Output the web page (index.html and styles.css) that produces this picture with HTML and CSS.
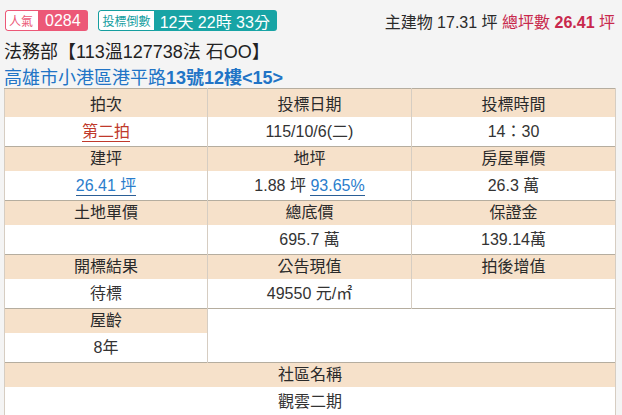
FILE: index.html
```html
<!DOCTYPE html>
<html lang="zh-Hant">
<head>
<meta charset="utf-8">
<link rel="stylesheet" href="styles.css">
</head>
<body>
<div class="page">
  <div class="topbar">
    <div class="badges">
      <span class="badge pink"><span class="lbl">人氣</span><span class="val">0284</span></span>
      <span class="badge teal"><span class="lbl">投標倒數</span><span class="val">12天 22時 33分</span></span>
    </div>
    <div class="area">主建物 17.31 坪 <span class="total">總坪數 <b>26.41</b> 坪</span></div>
  </div>
  <div class="title">法務部【113溫127738法 石OO】</div>
  <div class="addr">高雄市小港區港平路<b>13號12樓&lt;15&gt;</b></div>
  <table class="info">
    <colgroup><col class="c1"><col class="c2"><col class="c3"></colgroup>
    <tr class="hd first"><td>拍次</td><td>投標日期</td><td>投標時間</td></tr>
    <tr class="dt"><td><span class="red">第二拍</span></td><td>115/10/6(二)</td><td>14：30</td></tr>
    <tr class="hd"><td>建坪</td><td>地坪</td><td>房屋單價</td></tr>
    <tr class="dt"><td><span class="blue">26.41 坪</span></td><td>1.88 坪 <span class="blue">93.65%</span></td><td>26.3 萬</td></tr>
    <tr class="hd"><td>土地單價</td><td>總底價</td><td>保證金</td></tr>
    <tr class="dt"><td></td><td>695.7 萬</td><td>139.14萬</td></tr>
    <tr class="hd"><td>開標結果</td><td>公告現值</td><td>拍後增值</td></tr>
    <tr class="dt"><td>待標</td><td>49550 元/㎡</td><td></td></tr>
    <tr class="hd"><td>屋齡</td><td class="empty" colspan="2" rowspan="2"></td></tr>
    <tr class="dt"><td>8年</td></tr>
    <tr class="hd"><td colspan="3">社區名稱</td></tr>
    <tr class="dt"><td colspan="3">觀雲二期</td></tr>
  </table>
</div>
</body>
</html>
```
FILE: styles.css
```css
html, body {
  margin: 0;
  padding: 0;
  background: #f4f4f4;
}
body {
  font-family: "Liberation Sans", "Noto Sans CJK TC", sans-serif;
  color: #2a2a2a;
}
.page {
  padding: 10px 7px 0 4px;
}
.topbar {
  display: flex;
  justify-content: space-between;
  align-items: center;
  height: 21px;
}
.badges {
  display: flex;
  gap: 10px;
  padding-left: 1px;
}
.badge {
  display: flex;
  height: 21px;
  box-sizing: border-box;
  border-radius: 3px;
  overflow: hidden;
}
.badge .lbl {
  display: flex;
  align-items: center;
  background: #fff;
  font-size: 12px;
  border: 1px solid;
  border-right: none;
  border-radius: 3px 0 0 3px;
}
.badge .val {
  display: flex;
  align-items: center;
  color: #fff;
  font-size: 16px;
}
.pink .lbl { color: #ec5877; border-color: #ec5877; padding: 0 5px 0 3px; }
.pink .val { background: #ec5877; padding: 0 7px 0 7px; }
.teal .lbl { color: #159e9f; border-color: #159e9f; padding: 0 3px 0 4px; }
.teal .val { background: #18a4a5; padding: 0 7px 0 6px; }
.area {
  font-size: 16px;
  padding-top: 1px;
}
.area .total { color: #c8284c; }
.area .total b { font-weight: bold; }
.title {
  margin-top: 8px;
  font-size: 18px;
  line-height: 26px;
  color: #222;
}
.addr {
  margin-top: 3px;
  font-size: 18px;
  line-height: 20px;
  color: #2174c6;
}
.addr b { font-weight: bold; }
.info {
  width: 611px;
  table-layout: fixed;
  border-collapse: collapse;
  font-size: 16px;
  background: #fff;
  border: 1px solid #ada598;
}
.c1 { width: 203px; }
.c2 { width: 204px; }
.c3 { width: 204px; }
.info td {
  padding: 0;
  text-align: center;
  border-left: 1px solid #d6cdc2;
  border-right: 1px solid #d6cdc2;
}
.hd td {
  background: #f6e1ca;
  height: 24px;
  line-height: 24px;
  border-top: 1px solid #b5ad9f;
  color: #2a2a2a;
}
.hd td.empty {
  background: #fff;
}
.first td {
  padding-top: 4px;
}
.dt td {
  height: 29px;
  line-height: 29px;
  color: #333;
}
.red {
  color: #c0392b;
  border-bottom: 1px solid #c0392b;
  padding-bottom: 1px;
}
.blue {
  color: #2a7dcc;
  border-bottom: 1px solid #2a5e96;
  padding-bottom: 1px;
}
```
